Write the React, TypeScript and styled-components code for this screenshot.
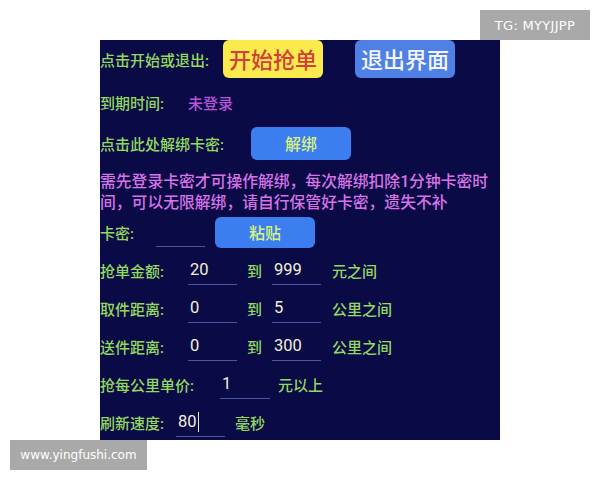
import React from "react";
import styled, { createGlobalStyle } from "styled-components";

const Global = createGlobalStyle`
  html, body { margin: 0; padding: 0; background: #ffffff; }
  body { font-family: Roboto, "Noto Sans CJK SC", sans-serif; }
`;

const Page = styled.div`
  position: relative;
  width: 600px;
  height: 480px;
  padding: 40px 0 0 100px;
  box-sizing: border-box;
  background: #ffffff;
`;

const Panel = styled.div`
  width: 400px;
  height: 400px;
  background: #0a0a47;
  overflow: hidden;
  display: flex;
  flex-direction: column;
`;

const Row = styled.div<{ $h: number; $mt?: number }>`
  display: flex;
  align-items: center;
  height: ${(p) => p.$h}px;
  margin-top: ${(p) => p.$mt ?? 0}px;
  flex-shrink: 0;
`;

const Label = styled.span<{ $w?: number }>`
  color: #93d95e;
  font-size: 15px;
  font-weight: 500;
  white-space: nowrap;
  width: ${(p) => (p.$w ? `${p.$w}px` : "auto")};
  flex-shrink: 0;
`;

const Unit = styled(Label)<{ $ml: number }>`
  margin-left: ${(p) => p.$ml}px;
`;

const Status = styled.span`
  color: #b653d6;
  font-size: 15px;
  font-weight: 500;
`;

const BigButton = styled.div<{ $bg: string; $fg: string; $ml: number }>`
  width: 100px;
  height: 38px;
  margin-left: ${(p) => p.$ml}px;
  border-radius: 6px;
  background: ${(p) => p.$bg};
  color: ${(p) => p.$fg};
  font-size: 22px;
  font-weight: 500;
  display: flex;
  align-items: center;
  justify-content: center;
  box-sizing: border-box;
  padding-bottom: 2px;
`;

const SmallButton = styled.div<{ $ml: number; $h: number }>`
  width: 100px;
  height: ${(p) => p.$h}px;
  margin-left: ${(p) => p.$ml}px;
  border-radius: 6px;
  background: #3c7ef0;
  color: #d8f27c;
  font-size: 16px;
  font-weight: 500;
  display: flex;
  align-items: center;
  justify-content: center;
`;

const Notice = styled.p`
  margin: 11px 0 0 0;
  color: #d873e6;
  font-size: 15.8px;
  font-weight: 500;
  line-height: 21px;
  width: 400px;
  white-space: nowrap;
`;

const Field = styled.div<{ $w?: number; $ml?: number }>`
  width: ${(p) => p.$w ?? 49}px;
  margin-left: ${(p) => p.$ml ?? 0}px;
  height: 30px;
  line-height: 28px;
  border-bottom: 1px solid #4b55a4;
  color: #f2f0d8;
  font-size: 16.5px;
  font-weight: 400;
  padding-left: 2px;
  box-sizing: border-box;
  flex-shrink: 0;
  display: flex;
  align-items: center;
`;

const Caret = styled.span`
  display: inline-block;
  width: 1px;
  height: 20px;
  background: #e8e8f0;
  margin-left: 1px;
`;

const Watermark = styled.div<{ $size: number }>`
  position: absolute;
  background: #a9a9a9;
  color: #ffffff;
  font-family: "DejaVu Sans", Verdana, sans-serif;
  font-size: ${(p) => p.$size}px;
  display: flex;
  align-items: center;
  justify-content: center;
`;

const TopMark = styled(Watermark)`
  top: 10px;
  left: 480px;
  width: 110px;
  height: 30px;
  letter-spacing: 0.3px;
`;

const BottomMark = styled(Watermark)`
  top: 440px;
  left: 10px;
  width: 137px;
  height: 30px;
`;

type RangeRow = { label: string; a: string; b: string; unit: string };

const ranges: RangeRow[] = [
  { label: "抢单金额:", a: "20", b: "999", unit: "元之间" },
  { label: "取件距离:", a: "0", b: "5", unit: "公里之间" },
  { label: "送件距离:", a: "0", b: "300", unit: "公里之间" },
];

export default function App() {
  return (
    <>
      <Global />
      <Page>
        <Panel>
          <Row $h={38}>
            <Label $w={113}>点击开始或退出:</Label>
            <BigButton $bg="#fbea4c" $fg="#d23f3c" $ml={10}>
              开始抢单
            </BigButton>
            <BigButton $bg="#4f80e6" $fg="#f4f6ff" $ml={32}>
              退出界面
            </BigButton>
          </Row>
          <Row $h={48}>
            <Label $w={88}>到期时间:</Label>
            <Status>未登录</Status>
          </Row>
          <Row $h={34}>
            <Label $w={151}>点击此处解绑卡密:</Label>
            <SmallButton $ml={0} $h={33}>解绑</SmallButton>
          </Row>
          <Notice>
            需先登录卡密才可操作解绑，每次解绑扣除1分钟卡密时
            <br />
            间，可以无限解绑，请自行保管好卡密，遗失不补
          </Notice>
          <Row $h={38}>
            <Label $w={56}>卡密:</Label>
            <Field />
            <SmallButton $ml={10} $h={31}>粘贴</SmallButton>
          </Row>
          {ranges.map((r) => (
            <Row $h={38} key={r.label}>
              <Label $w={88}>{r.label}</Label>
              <Field>{r.a}</Field>
              <Unit $ml={10} $w={25}>到</Unit>
              <Field>{r.b}</Field>
              <Unit $ml={11}>{r.unit}</Unit>
            </Row>
          ))}
          <Row $h={38}>
            <Label $w={120}>抢每公里单价:</Label>
            <Field $w={50}>1</Field>
            <Unit $ml={8}>元以上</Unit>
          </Row>
          <Row $h={38}>
            <Label $w={76}>刷新速度:</Label>
            <Field>
              80
              <Caret />
            </Field>
            <Unit $ml={10}>毫秒</Unit>
          </Row>
        </Panel>
        <TopMark $size={13}>TG: MYYJJPP</TopMark>
        <BottomMark $size={12}>www.yingfushi.com</BottomMark>
      </Page>
    </>
  );
}
